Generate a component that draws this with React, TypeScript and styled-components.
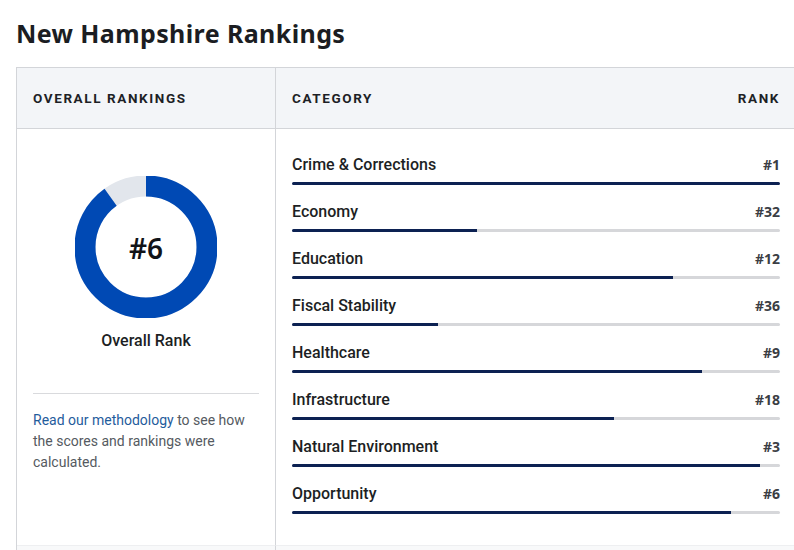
import styled, { createGlobalStyle } from "styled-components";

const GlobalStyle = createGlobalStyle`
  html, body {
    margin: 0;
    padding: 0;
    background: #ffffff;
    overflow: hidden;
  }
  body {
    font-family: Roboto, "Liberation Sans", sans-serif;
    color: #1d1f24;
  }
`;

const Page = styled.div`
  width: 794px;
  height: 550px;
  overflow: hidden;
  padding: 19px 0 0 16px;
  box-sizing: border-box;
`;

const Title = styled.h1`
  margin: 0 0 19px 0;
  font-family: "Noto Sans", "DejaVu Sans", sans-serif;
  font-size: 25px;
  line-height: 29px;
  font-weight: 700;
  color: #1b1d22;
  letter-spacing: 0.4px;
`;

const Table = styled.div`
  width: 800px;
  display: grid;
  grid-template-columns: 259px 1fr;
  grid-template-rows: 61px 416px 12px;
  border: 1px solid #d3d5d9;
  border-right: none;
  border-bottom: none;
`;

const HeadCell = styled.div<{ $first?: boolean }>`
  display: flex;
  align-items: center;
  justify-content: space-between;
  background: #f3f5f8;
  border-bottom: 1px solid #d3d5d9;
  border-right: ${(p) => (p.$first ? "1px solid #d3d5d9" : "none")};
  padding: 0 ${(p) => (p.$first ? "16px" : "14px")} 0 16px;
  font-size: 13.5px;
  font-weight: 700;
  letter-spacing: 1.6px;
  color: #1d1f26;
  text-transform: uppercase;
`;

const OverallCell = styled.div`
  border-right: 1px solid #d3d5d9;
  padding: 0 16px;
  display: flex;
  flex-direction: column;
  align-items: stretch;
`;

const DonutWrap = styled.div`
  position: relative;
  width: 142px;
  height: 142px;
  margin: 47px auto 0;
`;

const DonutLabel = styled.div`
  position: absolute;
  inset: 0;
  display: flex;
  align-items: center;
  justify-content: center;
  font-family: "Noto Sans", "DejaVu Sans", sans-serif;
  font-size: 28px;
  font-weight: 600;
  color: #111318;
  padding-top: 1px;
`;

const OverallCaption = styled.div`
  text-align: center;
  margin-top: 13px;
  font-size: 16px;
  font-weight: 500;
  color: #1d1f24;
`;

const Divider = styled.hr`
  margin: 43px 0 0;
  border: none;
  border-top: 1px solid #d9dadd;
`;

const Note = styled.p`
  margin: 16px 0 0;
  font-size: 14px;
  line-height: 21px;
  color: #555a61;
`;

const NoteLink = styled.a`
  color: #1f5c9c;
  text-decoration: none;
`;

const CategoryList = styled.div`
  padding: 26px 14px 0 16px;
  width: 488px;
  display: flex;
  flex-direction: column;
  gap: 17px;
`;

const Row = styled.div`
  display: flex;
  flex-direction: column;
  gap: 7px;
`;

const RowTop = styled.div`
  display: flex;
  justify-content: space-between;
  align-items: baseline;
  height: 20px;
`;

const RowName = styled.span`
  font-size: 16px;
  font-weight: 500;
  color: #1d1f24;
`;

const RowRank = styled.span`
  font-family: "Noto Sans", "DejaVu Sans", sans-serif;
  font-size: 14px;
  font-weight: 700;
  color: #3b3e44;
`;

const Track = styled.div`
  height: 3px;
  background: #d6d7da;
  border-radius: 2px;
  overflow: hidden;
`;

const Fill = styled.div`
  height: 100%;
  background: #0c2152;
`;

const BottomEdge = styled.div<{ $first?: boolean }>`
  background: #f8f9fa;
  border-top: 1px solid #eeeff1;
  border-right: ${(p) => (p.$first ? "1px solid #d3d5d9" : "none")};
`;

const categories: [string, number][] = [
  ["Crime & Corrections", 1],
  ["Economy", 32],
  ["Education", 12],
  ["Fiscal Stability", 36],
  ["Healthcare", 9],
  ["Infrastructure", 18],
  ["Natural Environment", 3],
  ["Opportunity", 6],
];

const share = (rank: number) => (51 - rank) / 50;

function Donut({ rank }: { rank: number }) {
  const r = 61;
  const c = 2 * Math.PI * r;
  const filled = c * share(rank);
  return (
    <DonutWrap>
      <svg width="142" height="142" viewBox="0 0 142 142">
        <circle cx="71" cy="71" r={r} fill="none" stroke="#e2e6ec" strokeWidth="21" />
        <circle
          cx="71"
          cy="71"
          r={r}
          fill="none"
          stroke="#0049b4"
          strokeWidth="21"
          strokeDasharray={`${filled} ${c}`}
          transform="rotate(-90 71 71)"
        />
      </svg>
      <DonutLabel>#{rank}</DonutLabel>
    </DonutWrap>
  );
}

export default function App() {
  return (
    <Page>
      <GlobalStyle />
      <Title>New Hampshire Rankings</Title>
      <Table>
        <HeadCell $first>Overall Rankings</HeadCell>
        <HeadCell style={{ width: 518, boxSizing: "border-box" }}>
          <span>Category</span>
          <span>Rank</span>
        </HeadCell>
        <OverallCell>
          <Donut rank={6} />
          <OverallCaption>Overall Rank</OverallCaption>
          <Divider />
          <Note>
            <NoteLink href="#">Read our methodology</NoteLink> to see how the scores and
            rankings were calculated.
          </Note>
        </OverallCell>
        <CategoryList>
          {categories.map(([name, rank]) => (
            <Row key={name}>
              <RowTop>
                <RowName>{name}</RowName>
                <RowRank>#{rank}</RowRank>
              </RowTop>
              <Track>
                <Fill style={{ width: `${share(rank) * 100}%` }} />
              </Track>
            </Row>
          ))}
        </CategoryList>
        <BottomEdge $first />
        <BottomEdge />
      </Table>
    </Page>
  );
}
